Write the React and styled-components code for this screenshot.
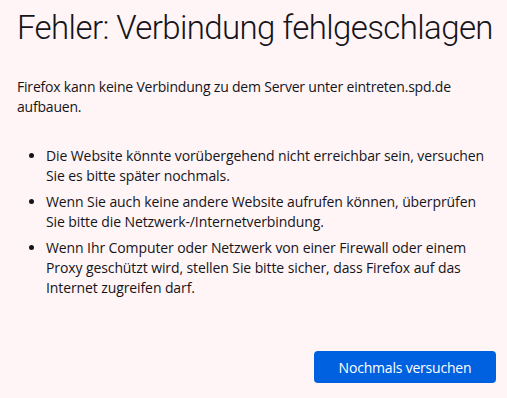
import React from 'react';
import styled, { createGlobalStyle } from 'styled-components';

const Global = createGlobalStyle`
  html, body {
    margin: 0;
    padding: 0;
    background: #fff5f6;
  }
  body {
    font-family: "Open Sans", "Noto Sans", sans-serif;
    color: #15141a;
  }
`;

const Page = styled.main`
  box-sizing: border-box;
  width: 507px;
  height: 398px;
  padding: 4px 20px 0 17px;
  display: flex;
  flex-direction: column;
`;

const Title = styled.h1`
  margin: 0;
  font-family: Roboto, "Open Sans", sans-serif;
  font-weight: 300;
  font-size: 33px;
  line-height: 48px;
  letter-spacing: -0.6px;
  white-space: nowrap;
  color: #15141a;
`;

const Description = styled.p`
  margin: 25px 0 0;
  font-size: 14px;
  line-height: 20px;
  letter-spacing: -0.2px;
`;

const List = styled.ul`
  margin: 29px 0 0;
  padding-left: 29px;
`;

const Item = styled.li`
  font-size: 14px;
  line-height: 20px;
  letter-spacing: -0.1px;
  margin-bottom: 6px;
`;

const Actions = styled.div`
  display: flex;
  justify-content: flex-end;
  margin: auto -9px 0 0;
  padding-bottom: 15px;
`;

const RetryButton = styled.button`
  width: 182px;
  height: 32px;
  border: none;
  border-radius: 4px;
  background: #0061e0;
  color: #fff;
  font-family: inherit;
  font-size: 14px;
  letter-spacing: -0.2px;
  cursor: pointer;
`;

const tips = [
  'Die Website könnte vorübergehend nicht erreichbar sein, versuchen Sie es bitte später nochmals.',
  'Wenn Sie auch keine andere Website aufrufen können, überprüfen Sie bitte die Netzwerk-/Internetverbindung.',
  'Wenn Ihr Computer oder Netzwerk von einer Firewall oder einem Proxy geschützt wird, stellen Sie bitte sicher, dass Firefox auf das Internet zugreifen darf.',
];

export default function App() {
  return (
    <>
      <Global />
      <Page>
        <Title>Fehler: Verbindung fehlgeschlagen</Title>
        <Description>
          Firefox kann keine Verbindung zu dem Server unter eintreten.spd.de aufbauen.
        </Description>
        <List>
          {tips.map((t) => (
            <Item key={t}>{t}</Item>
          ))}
        </List>
        <Actions>
          <RetryButton>Nochmals versuchen</RetryButton>
        </Actions>
      </Page>
    </>
  );
}
